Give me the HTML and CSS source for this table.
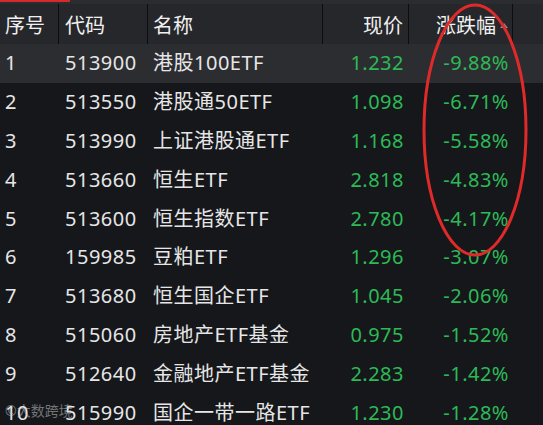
FILE: index.html
```html
<!DOCTYPE html>
<html lang="zh-CN">
<head>
    <meta charset="UTF-8">
    <meta name="viewport" content="width=device-width, initial-scale=1.0">
    <title>ETF 涨跌幅</title>
    <link rel="stylesheet" href="styles.css">
</head>
<body>
    <div class="board">
        <div class="topbar"><span class="topbar-mark"></span></div>

        <div class="row head">
            <div class="cell">序号</div>
            <div class="cell">代码</div>
            <div class="cell">名称</div>
            <div class="cell num">现价</div>
            <div class="cell num">涨跌幅<span class="sort"></span></div>
            <div class="cell"></div>
        </div>

        <div class="row active">
            <div class="cell">1</div><div class="cell">513900</div><div class="cell">港股100ETF</div>
            <div class="cell num green">1.232</div><div class="cell num green">-9.88%</div><div class="cell"></div>
        </div>
        <div class="row">
            <div class="cell">2</div><div class="cell">513550</div><div class="cell">港股通50ETF</div>
            <div class="cell num green">1.098</div><div class="cell num green">-6.71%</div><div class="cell"></div>
        </div>
        <div class="row">
            <div class="cell">3</div><div class="cell">513990</div><div class="cell">上证港股通ETF</div>
            <div class="cell num green">1.168</div><div class="cell num green">-5.58%</div><div class="cell"></div>
        </div>
        <div class="row">
            <div class="cell">4</div><div class="cell">513660</div><div class="cell">恒生ETF</div>
            <div class="cell num green">2.818</div><div class="cell num green">-4.83%</div><div class="cell"></div>
        </div>
        <div class="row">
            <div class="cell">5</div><div class="cell">513600</div><div class="cell">恒生指数ETF</div>
            <div class="cell num green">2.780</div><div class="cell num green">-4.17%</div><div class="cell"></div>
        </div>
        <div class="row">
            <div class="cell">6</div><div class="cell">159985</div><div class="cell">豆粕ETF</div>
            <div class="cell num green">1.296</div><div class="cell num green">-3.07%</div><div class="cell"></div>
        </div>
        <div class="row">
            <div class="cell">7</div><div class="cell">513680</div><div class="cell">恒生国企ETF</div>
            <div class="cell num green">1.045</div><div class="cell num green">-2.06%</div><div class="cell"></div>
        </div>
        <div class="row">
            <div class="cell">8</div><div class="cell">515060</div><div class="cell">房地产ETF基金</div>
            <div class="cell num green">0.975</div><div class="cell num green">-1.52%</div><div class="cell"></div>
        </div>
        <div class="row">
            <div class="cell">9</div><div class="cell">512640</div><div class="cell">金融地产ETF基金</div>
            <div class="cell num green">2.283</div><div class="cell num green">-1.42%</div><div class="cell"></div>
        </div>
        <div class="row">
            <div class="cell">10</div><div class="cell">515990</div><div class="cell">国企一带一路ETF</div>
            <div class="cell num green">1.230</div><div class="cell num green">-1.28%</div><div class="cell"></div>
        </div>

        <svg class="circle" width="543" height="425" viewBox="0 0 543 425">
            <ellipse cx="475" cy="130" rx="51" ry="125" fill="none" stroke="#e02a2a" stroke-width="3"/>
        </svg>

        <div class="watermark">©大数跨境</div>
    </div>
</body>
</html>
```

FILE: styles.css
```css
* {
    box-sizing: border-box;
}

body {
    margin: 0;
    padding: 0;
    background: #15171b;
    font-family: "Noto Sans", "Noto Sans CJK SC", sans-serif;
    color: #e6e6e6;
    overflow: hidden;
}

.board {
    position: relative;
    width: 543px;
    height: 425px;
    overflow: hidden;
}

.topbar {
    height: 4px;
    background: #2b2c30;
}

.topbar-mark {
    display: block;
    width: 70px;
    height: 2px;
    background: #d42a2a;
}

.row {
    display: grid;
    grid-template-columns: 59px 89px 175px 86px 104px 30px;
    height: 38.8px;
    align-items: center;
    font-size: 20px;
    letter-spacing: 0.5px;
}

.row .cell {
    padding: 0 5px;
    white-space: nowrap;
    line-height: 1;
}

.row .cell:nth-child(2) {
    padding-left: 6px;
}

.row .cell.num {
    text-align: right;
}

.row .cell:nth-child(4) {
    padding-right: 5px;
}

.row .cell:nth-child(5) {
    padding-right: 4px;
}

.head {
    height: 40px;
    background: #26272b;
    align-items: stretch;
    letter-spacing: 0;
}

.head .cell {
    display: flex;
    align-items: center;
    padding-top: 3px;
    border-right: 1px solid #0c0d0f;
    color: #f0f0f0;
}

.head .cell.num {
    justify-content: flex-end;
}

.head .cell:last-child {
    border-right: none;
}

.head .cell:nth-child(5) {
    position: relative;
    padding-right: 16px;
}

.sort {
    position: absolute;
    right: 4px;
    top: 19px;
    width: 0;
    height: 0;
    border-left: 4px solid transparent;
    border-right: 4px solid transparent;
    border-bottom: 5px solid #8a8b8e;
}

.active {
    background: #2c2d31;
}

.green {
    color: #2dba56;
}

.circle {
    position: absolute;
    left: 0;
    top: 0;
    pointer-events: none;
}

.watermark {
    position: absolute;
    left: 5px;
    bottom: 5px;
    font-size: 14px;
    color: rgba(210, 210, 210, 0.5);
}
```
